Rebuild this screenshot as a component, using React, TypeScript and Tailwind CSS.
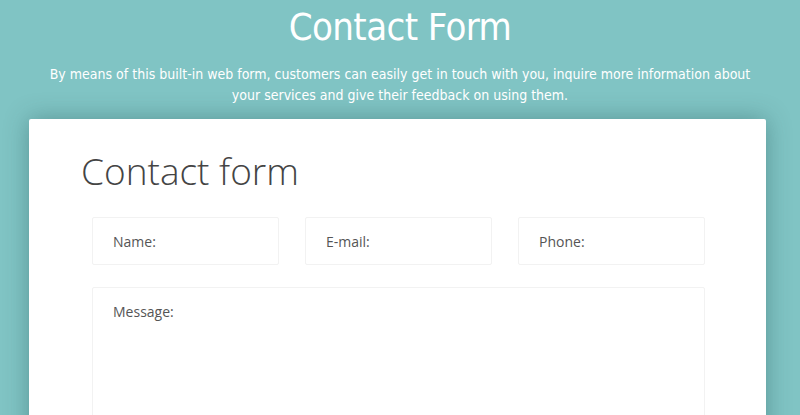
export default function App() {
  const fields = ['Name:', 'E-mail:', 'Phone:']

  return (
    <div className="min-h-screen h-[415px] overflow-hidden bg-[#80c4c4] font-['Open_Sans',sans-serif]">
      <header className="text-center text-white pt-[3px]">
        <h1 className="text-[38px] leading-[48px] font-['DejaVu_Sans_Condensed',sans-serif] tracking-[-0.6px]">
          Contact Form
        </h1>
        <p className="mt-[13px] mx-auto w-[712px] text-[14px] leading-[21px] font-['DejaVu_Sans_Condensed',sans-serif] tracking-[0px]">
          By means of this built-in web form, customers can easily get in touch with you, inquire more information about your services and give their feedback on using them.
        </p>
      </header>

      <main className="mt-[13px] mx-[29px] w-[737px] bg-white rounded-t-[2px] shadow-[0_0_25px_rgba(40,90,90,0.45)] h-[320px]">
        <h2 className="pt-[26px] pl-[52px] text-[37px] leading-[52px] font-light text-[#444]">
          Contact form
        </h2>
        <div className="pl-[63px] pr-[61px] pt-[20px]">
          <div className="grid grid-cols-3 gap-[26px]">
            {fields.map(f => (
              <div
                key={f}
                className="h-[48px] border border-[#f2f2f2] rounded-[2px] pl-[20px] flex items-center text-[14px] text-[#555]"
              >
                {f}
              </div>
            ))}
          </div>
          <div className="mt-[22px] h-[160px] border border-[#f2f2f2] rounded-[2px] pl-[20px] pt-[13px] text-[14px] text-[#555]">
            Message:
          </div>
        </div>
      </main>
    </div>
  )
}
